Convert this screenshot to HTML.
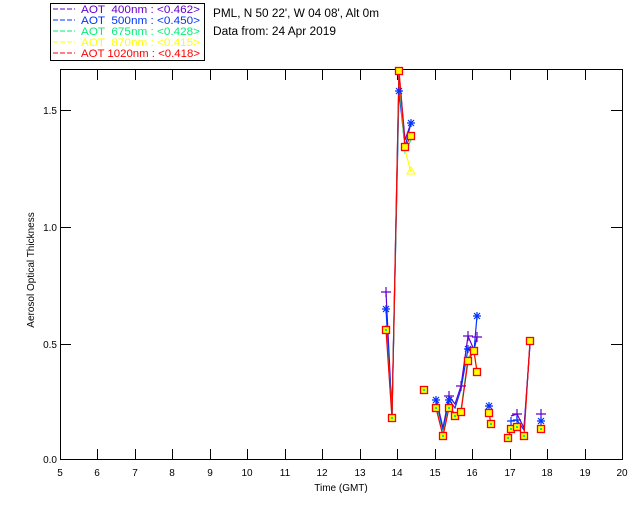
<!DOCTYPE html>
<html><head><meta charset="utf-8"><style>
html,body{margin:0;padding:0;background:#fff;}
svg{display:block;font-family:"Liberation Sans",sans-serif;}
</style></head><body>
<svg width="640" height="512" viewBox="0 0 640 512" xmlns="http://www.w3.org/2000/svg">
<rect width="640" height="512" fill="#fff"/>
<rect x="50.5" y="3.5" width="154" height="57" fill="#fff" stroke="#000" stroke-width="1"/>
<g font-size="11" textLength="118" lengthAdjust="spacingAndGlyphs">
<line x1="53" y1="9" x2="75" y2="9" stroke="#6600cc" stroke-dasharray="5,2"/>
<text x="81" y="13" fill="#6600cc" xml:space="preserve" textLength="119" lengthAdjust="spacingAndGlyphs">AOT  400nm : &lt;0.462&gt;</text>
<line x1="53" y1="20" x2="75" y2="20" stroke="#0033ff" stroke-dasharray="5,2"/>
<text x="81" y="24" fill="#0033ff" xml:space="preserve" textLength="119" lengthAdjust="spacingAndGlyphs">AOT  500nm : &lt;0.450&gt;</text>
<line x1="53" y1="31" x2="75" y2="31" stroke="#00ee77" stroke-dasharray="5,2"/>
<text x="81" y="35" fill="#00ee77" xml:space="preserve" textLength="119" lengthAdjust="spacingAndGlyphs">AOT  675nm : &lt;0.428&gt;</text>
<line x1="53" y1="42" x2="75" y2="42" stroke="#ffff00" stroke-dasharray="5,2"/>
<text x="81" y="46" fill="#ffff00" xml:space="preserve" textLength="119" lengthAdjust="spacingAndGlyphs">AOT  870nm : &lt;0.415&gt;</text>
<line x1="53" y1="53" x2="75" y2="53" stroke="#ff0000" stroke-dasharray="5,2"/>
<text x="81" y="57" fill="#ff0000" xml:space="preserve" textLength="119" lengthAdjust="spacingAndGlyphs">AOT 1020nm : &lt;0.418&gt;</text>
</g>
<text x="213" y="17" font-size="11.5" textLength="166" lengthAdjust="spacingAndGlyphs">PML, N 50 22', W 04 08', Alt 0m</text>
<text x="213" y="35" font-size="11.5" textLength="123" lengthAdjust="spacingAndGlyphs">Data from: 24 Apr 2019</text>
<rect x="60.5" y="69.5" width="562" height="390" fill="none" stroke="#000"/>
<g stroke="#000" fill="none">
<path d="M97.5 70v10M135.5 70v10M172.5 70v10M210.5 70v10M247.5 70v10M285.5 70v10M322.5 70v10M360.5 70v10M397.5 70v10M435.5 70v10M472.5 70v10M510.5 70v10M547.5 70v10M585.5 70v10"/>
<path d="M97.5 459v-10M135.5 459v-10M172.5 459v-10M210.5 459v-10M247.5 459v-10M285.5 459v-10M322.5 459v-10M360.5 459v-10M397.5 459v-10M435.5 459v-10M472.5 459v-10M510.5 459v-10M547.5 459v-10M585.5 459v-10"/>
<path d="M60 110.5h11M60 227.5h11M60 344.5h11M622 110.5h-11M622 227.5h-11M622 344.5h-11"/>
</g>
<g font-size="10" text-anchor="middle">
<text x="60" y="476">5</text><text x="97" y="476">6</text><text x="135" y="476">7</text><text x="172" y="476">8</text><text x="210" y="476">9</text><text x="247" y="476">10</text><text x="285" y="476">11</text><text x="322" y="476">12</text><text x="360" y="476">13</text><text x="397" y="476">14</text><text x="435" y="476">15</text><text x="472" y="476">16</text><text x="510" y="476">17</text><text x="547" y="476">18</text><text x="585" y="476">19</text><text x="622" y="476">20</text>
<text x="341" y="491">Time (GMT)</text>
</g>
<g font-size="10" text-anchor="end">
<text x="57" y="114">1.5</text><text x="57" y="231">1.0</text><text x="57" y="348">0.5</text><text x="57" y="463">0.0</text>
</g>
<text x="0" y="0" font-size="10" text-anchor="middle" transform="translate(34,270) rotate(-90)">Aerosol Optical Thickness</text>
<g fill="none" stroke-width="1.2">
<polyline stroke="#6600cc" points="386,292 392,414 399,71 405,140 411,123"/>
<polyline stroke="#6600cc" points="436,398 443,428 449,396 455,404 461,386 468,336 474,350 477,337"/>
<polyline stroke="#6600cc" points="511,416 517,414 524,428 530,344"/>
<polyline stroke="#0033ff" points="386,309 392,414 399,91 405,147 411,123"/>
<polyline stroke="#0033ff" points="436,400 443,430 449,400 455,408 461,389 468,349 474,351 477,316"/>
<polyline stroke="#0033ff" points="511,421 517,420 524,430 530,344"/>
<polyline stroke="#00ee77" points="386,325 392,418 399,78 405,152 411,140"/>
<polyline stroke="#00ee77" points="436,406 443,434 449,406 455,414 461,410 468,358 474,350"/>
<polyline stroke="#ffff00" points="399,71 405,150 411,172"/>
<polyline stroke="#ffff00" points="474,355 477,368"/>
<polyline stroke="#ff0000" points="386,330 392,418 399,71 405,147 411,136"/>
<polyline stroke="#ff0000" points="436,408 443,436 449,408 455,416 461,412 468,361 474,351 477,372"/>
<polyline stroke="#ff0000" points="489,413 491,424"/>
<polyline stroke="#ff0000" points="508,438 511,429 517,427 524,436 530,341"/>
</g>
<g stroke="#6600cc" stroke-width="1.2">
<path d="M386 287v10M381 292h10M468 331v10M463 336h10M477 332v10M472 337h10M449 391v10M444 396h10M517 409v10M512 414h10M541 409v10M536 414h10M461 381v10M456 386h10"/>
</g>
<g stroke="#0033ff" stroke-width="1.2">
<path d="M382 309h8M386 305v8M383 306l6 6M389 306l-6 6"/>
<path d="M395 91h8M399 87v8M396 88l6 6M402 88l-6 6"/>
<path d="M407 123h8M411 119v8M408 120l6 6M414 120l-6 6"/>
<path d="M473 316h8M477 312v8M474 313l6 6M480 313l-6 6"/>
<path d="M485 406h8M489 402v8M486 403l6 6M492 403l-6 6"/>
<path d="M432 400h8M436 396v8M433 397l6 6M439 397l-6 6"/>
<path d="M445 400h8M449 396v8M446 397l6 6M452 397l-6 6"/>
<path d="M464 349h8M468 345v8M465 346l6 6M471 346l-6 6"/>
<path d="M537 421h8M541 417v8M538 418l6 6M544 418l-6 6"/>
<path d="M507 421h8M511 417v8"/><path d="M513 420h8M517 416v8"/>
</g>
<polygon points="411,167 407,174 415,174" fill="none" stroke="#ffff00"/>
<g fill="#ffff00" stroke="#ff0000" stroke-width="1.3">
<rect x="382.5" y="326.5" width="7" height="7"/><rect x="388.5" y="414.5" width="7" height="7"/><rect x="395.5" y="67.5" width="7" height="7"/><rect x="401.5" y="143.5" width="7" height="7"/><rect x="407.5" y="132.5" width="7" height="7"/><rect x="420.5" y="386.5" width="7" height="7"/><rect x="432.5" y="404.5" width="7" height="7"/><rect x="439.5" y="432.5" width="7" height="7"/><rect x="445.5" y="404.5" width="7" height="7"/><rect x="451.5" y="412.5" width="7" height="7"/><rect x="457.5" y="408.5" width="7" height="7"/><rect x="464.5" y="357.5" width="7" height="7"/><rect x="470.5" y="347.5" width="7" height="7"/><rect x="473.5" y="368.5" width="7" height="7"/><rect x="485.5" y="409.5" width="7" height="7"/><rect x="487.5" y="420.5" width="7" height="7"/><rect x="504.5" y="434.5" width="7" height="7"/><rect x="507.5" y="425.5" width="7" height="7"/><rect x="513.5" y="423.5" width="7" height="7"/><rect x="520.5" y="432.5" width="7" height="7"/><rect x="526.5" y="337.5" width="7" height="7"/><rect x="537.5" y="425.5" width="7" height="7"/>
</g>
<g fill="#00ee77">
<rect x="385" y="329" width="2" height="2"/><rect x="391" y="417" width="2" height="2"/><rect x="423" y="389" width="2" height="2"/><rect x="435" y="407" width="2" height="2"/><rect x="442" y="435" width="2" height="2"/><rect x="448" y="407" width="2" height="2"/><rect x="454" y="415" width="2" height="2"/><rect x="490" y="423" width="2" height="2"/><rect x="507" y="437" width="2" height="2"/><rect x="510" y="428" width="2" height="2"/><rect x="516" y="426" width="2" height="2"/><rect x="523" y="435" width="2" height="2"/><rect x="540" y="428" width="2" height="2"/>
</g>
</svg>
</body></html>
